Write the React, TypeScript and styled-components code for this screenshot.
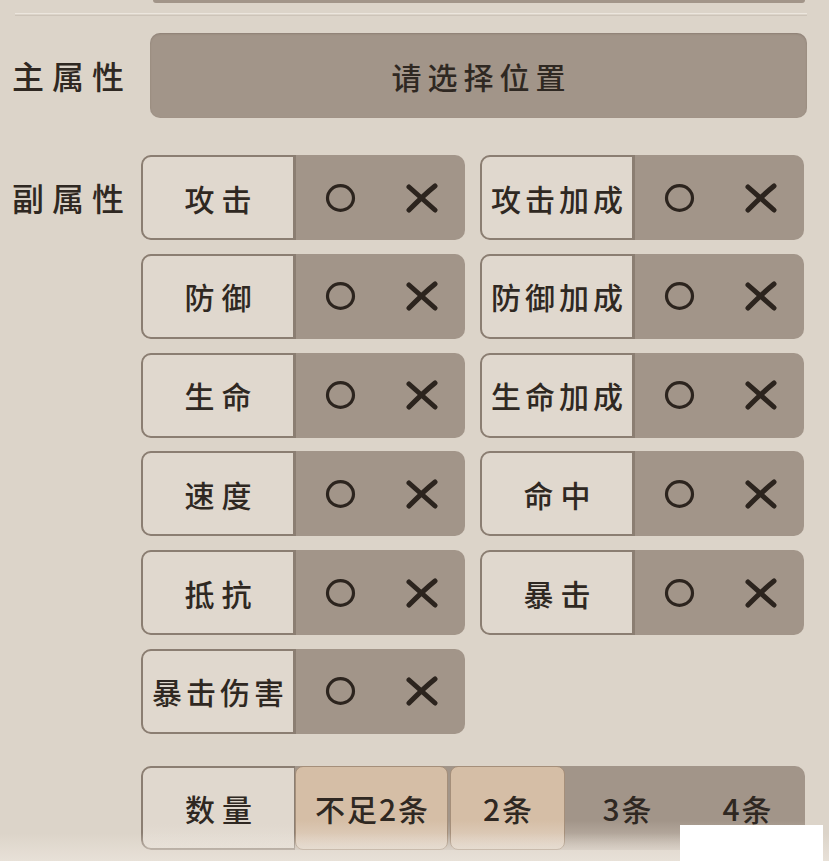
import React from "react";
import styled, { createGlobalStyle } from "styled-components";

const Global = createGlobalStyle`
  html, body { margin: 0; padding: 0; background: #dcd4c9; }
  body { font-family: "Noto Sans CJK SC", "Noto Sans", sans-serif; color: #2f2822; }
`;

const DARK = "#a29589";
const LIGHT = "#e0d8ce";
const EDGE = "#8b7e72";
const TAN = "#d5bea6";

const Page = styled.div`
  position: relative;
  width: 829px;
  height: 861px;
  overflow: hidden;
  background: #dcd4c9;
`;

const TopStub = styled.div`
  margin-left: 153px;
  width: 652px;
  height: 3px;
  background: ${DARK};
  border-radius: 0 0 6px 6px;
`;

const Divider = styled.div`
  margin: 10px 22px 0 15px;
  height: 1px;
  border-top: 1px solid #ece6de;
  border-bottom: 1px solid #cdc4b9;
`;

const MainRow = styled.div`
  display: flex;
  align-items: center;
  margin-top: 17px;
`;

const SideLabel = styled.div<{ $w: number }>`
  width: ${(p) => p.$w}px;
  box-sizing: border-box;
  padding-left: 12px;
  font-size: 32px;
  font-weight: 500;
  letter-spacing: 8px;
  line-height: 85px;
  height: 85px;
  white-space: nowrap;
  flex: none;
`;

const SelectBox = styled.div`
  width: 657px;
  height: 85px;
  border-radius: 10px;
  background: ${DARK};
  box-shadow: inset 0 1px 2px rgba(80, 65, 55, 0.25);
  display: flex;
  align-items: center;
  justify-content: center;
  font-size: 30px;
  font-weight: 500;
  letter-spacing: 6px;
  padding-left: 6px;
  box-sizing: border-box;
`;

const SubSection = styled.div`
  display: flex;
  margin-top: 37px;
`;

const Grid = styled.div`
  display: grid;
  grid-template-columns: 324px 324px;
  column-gap: 15px;
  row-gap: 13.8px;
  align-content: start;
`;

const Cell = styled.div`
  display: flex;
  width: 324px;
  height: 85px;
  border-radius: 10px;
  background: ${DARK};
  overflow: hidden;
`;

const CellLabel = styled.div<{ $tight?: boolean }>`
  width: 155px;
  flex: none;
  box-sizing: border-box;
  background: ${LIGHT};
  border: 2px solid ${EDGE};
  border-right-width: 3px;
  border-radius: 10px 0 0 10px;
  display: flex;
  align-items: center;
  justify-content: center;
  font-size: 30px;
  font-weight: 500;
  letter-spacing: ${(p) => (p.$tight ? 4 : 7)}px;
  padding-left: ${(p) => (p.$tight ? 4 : 7)}px;
  white-space: nowrap;
`;

const Actions = styled.div`
  flex: 1;
  display: flex;
  align-items: center;
  padding-left: 29px;
  gap: 49px;
`;

const QtyRow = styled.div`
  display: flex;
  margin-top: 32px;
`;

const QtyBar = styled.div`
  width: 664px;
  height: 84px;
  display: flex;
  border-radius: 10px;
  background: linear-gradient(to bottom, ${DARK} 0%, ${DARK} 65%, #c7bcb1 100%);
  overflow: hidden;
`;

const QtyLabel = styled.div`
  width: 154px;
  flex: none;
  box-sizing: border-box;
  background: linear-gradient(to bottom, ${LIGHT} 0%, ${LIGHT} 70%, #e6dfd6 100%);
  border: 2px solid ${EDGE};
  border-right-width: 1px;
  border-radius: 10px 0 0 10px;
  display: flex;
  align-items: center;
  justify-content: center;
  font-size: 30px;
  font-weight: 500;
  letter-spacing: 7px;
  padding-left: 7px;
`;

const QtyOpt = styled.div<{ $w: number; $on?: boolean }>`
  width: ${(p) => p.$w}px;
  flex: none;
  box-sizing: border-box;
  display: flex;
  align-items: center;
  justify-content: center;
  font-size: 30px;
  font-weight: 500;
  letter-spacing: 2px;
  padding-left: 2px;
  white-space: nowrap;
  margin-right: ${(p) => (p.$on ? 2 : 0)}px;
  border-radius: ${(p) => (p.$on ? "8px" : "0")};
  border: ${(p) => (p.$on ? "1px solid #a58f7a" : "none")};
  background: ${(p) =>
    p.$on
      ? `linear-gradient(to bottom, ${TAN} 0%, ${TAN} 65%, #e3d5c7 100%)`
      : "transparent"};
`;

const BottomFade = styled.div`
  position: absolute;
  left: 0;
  right: 0;
  bottom: 0;
  height: 28px;
  background: linear-gradient(to bottom, rgba(230, 223, 214, 0), rgba(233, 226, 217, 0.9));
  pointer-events: none;
`;

const WhiteBox = styled.div`
  position: absolute;
  left: 680px;
  top: 825px;
  width: 143px;
  height: 36px;
  background: #ffffff;
`;

const Circle = () => (
  <svg width="31" height="30" viewBox="0 0 31 30">
    <ellipse cx="15.5" cy="15" rx="13" ry="12.3" fill="none" stroke="#2c241e" strokeWidth="3.2" />
  </svg>
);

const Cross = () => (
  <svg width="34" height="30" viewBox="0 0 34 30">
    <path d="M4 4 C12 11 21 19 30 27" fill="none" stroke="#2c241e" strokeWidth="5" strokeLinecap="round" />
    <path d="M30 3 C20 11 12 19 4 27" fill="none" stroke="#2c241e" strokeWidth="5" strokeLinecap="round" />
  </svg>
);

const subs = [
  "攻击",
  "攻击加成",
  "防御",
  "防御加成",
  "生命",
  "生命加成",
  "速度",
  "命中",
  "抵抗",
  "暴击",
  "暴击伤害",
];

export default function App() {
  return (
    <Page>
      <Global />
      <TopStub />
      <Divider />
      <MainRow>
        <SideLabel $w={150}>主属性</SideLabel>
        <SelectBox>请选择位置</SelectBox>
      </MainRow>
      <SubSection>
        <SideLabel $w={141}>副属性</SideLabel>
        <Grid>
          {subs.map((s) => (
            <Cell key={s}>
              <CellLabel $tight={s.length > 2}>{s}</CellLabel>
              <Actions>
                <Circle />
                <Cross />
              </Actions>
            </Cell>
          ))}
        </Grid>
      </SubSection>
      <QtyRow>
        <SideLabel $w={141} />
        <QtyBar>
          <QtyLabel>数量</QtyLabel>
          <QtyOpt $w={153} $on>不足2条</QtyOpt>
          <QtyOpt $w={115} $on>2条</QtyOpt>
          <QtyOpt $w={120}>3条</QtyOpt>
          <QtyOpt $w={120}>4条</QtyOpt>
        </QtyBar>
      </QtyRow>
      <BottomFade />
      <WhiteBox />
    </Page>
  );
}
